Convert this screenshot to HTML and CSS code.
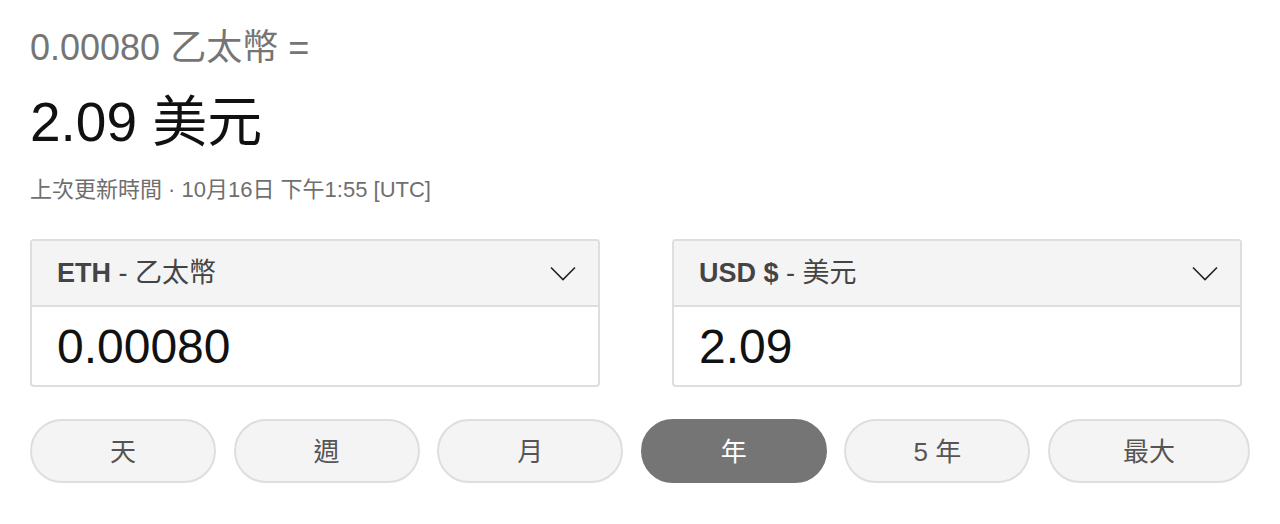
FILE: index.html
```html
<!DOCTYPE html>
<html lang="zh-Hant">
<head>
<meta charset="utf-8">
<title>乙太幣 兌換 美元</title>
<link rel="stylesheet" href="styles.css">
</head>
<body>
<main class="converter">
  <section class="summary">
    <div class="from-line">0.00080 乙太幣 =</div>
    <div class="to-line">2.09 美元</div>
    <div class="updated">上次更新時間 · 10月16日 下午1:55 [UTC]</div>
  </section>

  <section class="boxes">
    <div class="box">
      <div class="box-head">
        <span class="cur"><b>ETH</b> - 乙太幣</span>
        <svg class="chev" width="26" height="15" viewBox="0 0 26 15"><path d="M1 1.5 L13 13.5 L25 1.5" fill="none" stroke="#222" stroke-width="1.6"/></svg>
      </div>
      <div class="box-value">0.00080</div>
    </div>
    <div class="box">
      <div class="box-head">
        <span class="cur"><b>USD $</b> - 美元</span>
        <svg class="chev" width="26" height="15" viewBox="0 0 26 15"><path d="M1 1.5 L13 13.5 L25 1.5" fill="none" stroke="#222" stroke-width="1.6"/></svg>
      </div>
      <div class="box-value">2.09</div>
    </div>
  </section>

  <nav class="ranges">
    <button class="range">天</button>
    <button class="range">週</button>
    <button class="range">月</button>
    <button class="range active">年</button>
    <button class="range">5 年</button>
    <button class="range wide">最大</button>
  </nav>
</main>
</body>
</html>
```

FILE: styles.css
```css
html, body {
  margin: 0;
  padding: 0;
  background: #fff;
}

body {
  font-family: "Liberation Sans", Arial, "Noto Sans CJK TC", sans-serif;
  color: #202124;
}

.converter {
  padding: 26px 30px 0 30px;
}

.summary {
  display: flex;
  flex-direction: column;
}

.from-line {
  font-size: 36px;
  line-height: 44px;
  color: #757575;
}

.to-line {
  margin-top: 20px;
  font-size: 55px;
  line-height: 64px;
  color: #111;
}

.updated {
  margin-top: 23px;
  font-size: 22px;
  line-height: 26px;
  color: #6f6f6f;
}

.boxes {
  margin-top: 36px;
  display: grid;
  grid-template-columns: 570px 570px;
  column-gap: 72px;
}

.box {
  border: 2px solid #dedede;
  border-radius: 4px;
  overflow: hidden;
}

.box-head {
  height: 64px;
  background: #f4f4f4;
  border-bottom: 2px solid #dedede;
  display: flex;
  align-items: center;
  justify-content: space-between;
  padding: 0 22px 0 25px;
}

.cur {
  font-size: 27px;
  line-height: 32px;
  color: #444;
}

.cur b {
  font-weight: bold;
}

.chev {
  display: block;
}

.box-value {
  height: 78px;
  display: flex;
  align-items: center;
  padding-left: 25px;
  font-size: 48px;
  color: #111;
}

.ranges {
  margin-top: 32px;
  display: flex;
  gap: 17.6px;
  width: 1220px;
}

.range {
  flex: 0 0 186px;
  height: 64px;
  border: 2px solid #dedede;
  border-radius: 32px;
  background: #f4f4f4;
  color: #555;
  font-family: "Liberation Sans", Arial, "Noto Sans CJK TC", sans-serif;
  font-size: 26px;
  padding: 0 0 4px 0;
}

.range.active {
  background: #757575;
  border-color: #757575;
  color: #fff;
}

.range.wide {
  flex: 1 1 auto;
}
```
